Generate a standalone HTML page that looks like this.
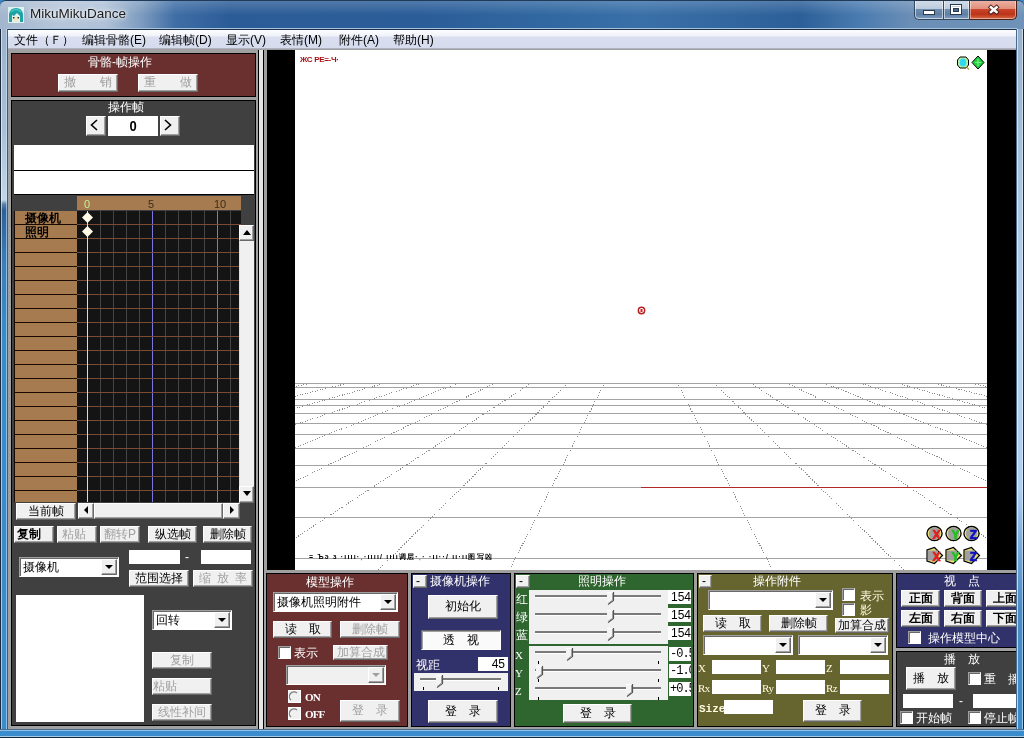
<!DOCTYPE html><html><head><meta charset="utf-8"><style>
*{margin:0;padding:0;box-sizing:border-box}
html,body{width:1024px;height:738px;overflow:hidden;background:#3a86c6}
body{will-change:transform;position:relative;font-family:"Liberation Sans",sans-serif;font-size:12px;color:#000}
div{position:absolute}
.t{white-space:nowrap;line-height:12px}
.btn{padding-bottom:2px;background:#f0f0f0;border-top:1px solid #fff;border-left:1px solid #fff;border-right:1px solid #696969;border-bottom:1px solid #696969;box-shadow:inset -1px -1px 0 #a0a0a0;display:flex;align-items:center;justify-content:center;white-space:nowrap;font-size:12px;line-height:12px}
.btn.dis{color:#a0a0a0}
.edit{background:#fff}
.combo{background:#fff;border-top:1px solid #a0a0a0;border-left:1px solid #a0a0a0;border-right:1px solid #fff;border-bottom:1px solid #fff;box-shadow:inset 1px 1px 0 #696969}
.combo .ct{position:absolute;left:3px;top:50%;transform:translateY(-50%);white-space:nowrap;font-size:12px}
.combo .cb{position:absolute;right:1px;top:1px;bottom:1px;background:#f0f0f0;border-top:1px solid #fff;border-left:1px solid #fff;border-right:1px solid #696969;border-bottom:1px solid #696969;box-shadow:inset -1px -1px 0 #a0a0a0}
.combo .cb i{position:absolute;left:50%;top:50%;margin-left:-4px;margin-top:-2px;width:0;height:0;border-left:4px solid transparent;border-right:4px solid transparent;border-top:4px solid #000}
.combo.dis .cb i{border-top-color:#a0a0a0}
.chk{background:#fff;border-top:1px solid #a0a0a0;border-left:1px solid #a0a0a0;border-right:1px solid #fff;border-bottom:1px solid #fff;box-shadow:inset 1px 1px 0 #696969}
.w{color:#fff}
</style></head><body>
<div style="left:0px;top:0px;width:1024px;height:29px;background:linear-gradient(180deg,rgba(255,255,255,.18) 0,rgba(255,255,255,0) 14px),linear-gradient(90deg,#a3b6cd 0px,#b6c6da 60px,#b0c2d8 105px,#7f9dc0 140px,#3f6ea6 175px,#2c5c97 230px,#2b5d98 420px,#3269a2 560px,#3a70a8 640px,#2c5f98 800px,#4a7bb0 860px,#6a8eb6 910px,#6f92b8 1024px);border-top:1px solid #203a5a;border-radius:6px 6px 0 0"></div>
<svg style="position:absolute;left:8px;top:7px" width="16" height="16"><rect x="0" y="0" width="16" height="16" fill="#dff2f2"/><path d="M1 15 L1 7 Q2 1 8 1 Q14 1 15 7 L15 15 L12 15 L12 9 L9 6 L6 9 L4 8 L4 15 Z" fill="#1ea2a4"/><path d="M3 5 Q8 0 13 5" stroke="#45c8c8" stroke-width="1.5" fill="none"/><ellipse cx="8" cy="12" rx="3.5" ry="3" fill="#f4e6c8"/><rect x="5" y="10" width="1.5" height="1.5" fill="#204040"/><rect x="9.5" y="10" width="1.5" height="1.5" fill="#204040"/></svg>
<div class="t" style="left:30px;top:7px;font-size:13.5px;color:#1a1a1a;line-height:13px;text-shadow:0 0 6px #fff,0 0 3px #fff">MikuMikuDance</div>
<div style="left:914px;top:0px;width:29px;height:20px;background:linear-gradient(180deg,#d4deea 0,#bccbdc 45%,#6f8db0 50%,#5f80a6 75%,#7d9cbf 100%);border:1px solid #34485f;border-top:none;border-right:none;border-radius:0 0 0 5px;box-shadow:inset 0 0 0 1px rgba(255,255,255,.55)"></div>
<div style="left:943px;top:0px;width:27px;height:20px;background:linear-gradient(180deg,#d4deea 0,#bccbdc 45%,#6f8db0 50%,#5f80a6 75%,#7d9cbf 100%);border:1px solid #34485f;border-top:none;box-shadow:inset 0 0 0 1px rgba(255,255,255,.55)"></div>
<div style="left:970px;top:0px;width:47px;height:20px;background:linear-gradient(180deg,#eeb4a8 0,#e0907c 45%,#c8442a 50%,#bc3418 75%,#d66a48 100%);border:1px solid #4a2018;border-top:none;border-left:none;border-radius:0 0 5px 0;box-shadow:inset 0 0 0 1px rgba(255,255,255,.45)"></div>
<svg width="1024" height="30" style="position:absolute;left:0;top:0"><rect x="923.5" y="10.5" width="11" height="4" fill="#fff" stroke="#2a3a4c" stroke-width="1"/><rect x="950.5" y="4.5" width="11" height="10" fill="none" stroke="#2a3a4c" stroke-width="1"/><rect x="951.5" y="5.5" width="9" height="8" fill="none" stroke="#fff" stroke-width="1"/><rect x="952.5" y="7.5" width="7" height="5" fill="#6c8aaa" stroke="#fff" stroke-width="1"/><rect x="953.5" y="8.5" width="5" height="3" fill="#4a6a8a" stroke="#2a3a4c" stroke-width="1"/><path d="M989.3 5.8 L998.2 13.6 M998.2 5.8 L989.3 13.6" stroke="#4a2018" stroke-width="4.2" stroke-linecap="butt"/><path d="M990 6.5 L997.5 12.9 M997.5 6.5 L990 12.9" stroke="#fff" stroke-width="2.5" stroke-linecap="butt"/><rect x="914" y="0" width="103" height="1" fill="#24364c"/></svg>
<div style="left:8px;top:29px;width:1008px;height:700px;background:#a0a0a0"></div>
<div style="left:7px;top:28px;width:1010px;height:1px;background:#a8c4e0"></div>
<div style="left:8px;top:29px;width:1008px;height:20px;background:linear-gradient(180deg,#fcfdfe 0,#eff2f9 6px,#d9dfef 7px,#d6dcee 17px);border-top:1px solid #1e3048;border-bottom:1px solid #b0b4c2"></div>
<div class="t" style="left:14px;top:34px;font-size:12px;line-height:12px">文件（Ｆ）</div>
<div class="t" style="left:82px;top:34px;font-size:12px;line-height:12px">编辑骨骼(E)</div>
<div class="t" style="left:159px;top:34px;font-size:12px;line-height:12px">编辑帧(D)</div>
<div class="t" style="left:226px;top:34px;font-size:12px;line-height:12px">显示(V)</div>
<div class="t" style="left:280px;top:34px;font-size:12px;line-height:12px">表情(M)</div>
<div class="t" style="left:339px;top:34px;font-size:12px;line-height:12px">附件(A)</div>
<div class="t" style="left:393px;top:34px;font-size:12px;line-height:12px">帮助(H)</div>
<div style="left:11px;top:53px;width:245px;height:44px;background:#6a3030;border:1px solid #000"></div>
<div class="t" style="left:88px;top:56px;color:#fff;font-size:12px">骨骼-帧操作</div>
<div class="btn dis" style="left:58px;top:74px;width:60px;height:18px;"><span style="">撤　　销</span></div>
<div class="btn dis" style="left:138px;top:74px;width:60px;height:18px;"><span style="">重　　做</span></div>
<div style="left:11px;top:100px;width:245px;height:626px;background:#404040;border:1px solid #000"></div>
<div class="t" style="left:108px;top:101px;color:#fff;font-size:12px">操作帧</div>
<div class="btn" style="left:86px;top:116px;width:20px;height:20px;"><span style=""></span></div>
<div class="edit" style="left:108px;top:116px;width:50px;height:20px;"><span style="position:absolute;left:0;right:0;top:2px;text-align:center;font-weight:bold;font-size:13px;transform:scaleY(1.12)">0</span></div>
<div class="btn" style="left:160px;top:116px;width:20px;height:20px;"><span style=""></span></div>
<svg style="position:absolute;left:0;top:0" width="200" height="140"><path d="M97 120 L91.5 125 L97 130" fill="none" stroke="#000" stroke-width="1.6"/><path d="M165 120 L170.5 125 L165 130" fill="none" stroke="#000" stroke-width="1.6"/></svg>
<div style="left:14px;top:145px;width:240px;height:25px;background:#fff"></div>
<div style="left:14px;top:171px;width:240px;height:23px;background:#fff"></div>
<div style="left:14px;top:170px;width:240px;height:1px;background:#000"></div>
<div style="left:14px;top:194px;width:240px;height:1px;background:#000"></div>
<div style="left:77px;top:196px;width:164px;height:14px;background:#a67b50"></div>
<div class="t" style="left:84px;top:199px;color:#c8ec98;font-size:11px;line-height:10px">0</div>
<div class="t" style="left:148px;top:199px;color:#3c2c1c;font-size:11px;line-height:10px">5</div>
<div class="t" style="left:214px;top:199px;color:#3c2c1c;font-size:11px;line-height:10px">10</div>
<svg width="1024" height="738" style="position:absolute;left:0;top:0"><rect x="77" y="211" width="164" height="291" fill="#141414"/><rect x="14" y="211" width="63" height="291" fill="#1a0a04"/><rect x="15" y="211" width="62" height="13" fill="#a67b50"/><rect x="15" y="225" width="62" height="13" fill="#a67b50"/><rect x="15" y="239" width="62" height="13" fill="#a67b50"/><rect x="15" y="253" width="62" height="13" fill="#a67b50"/><rect x="15" y="267" width="62" height="13" fill="#a67b50"/><rect x="15" y="281" width="62" height="13" fill="#a67b50"/><rect x="15" y="295" width="62" height="13" fill="#a67b50"/><rect x="15" y="309" width="62" height="13" fill="#a67b50"/><rect x="15" y="323" width="62" height="13" fill="#a67b50"/><rect x="15" y="337" width="62" height="13" fill="#a67b50"/><rect x="15" y="351" width="62" height="13" fill="#a67b50"/><rect x="15" y="365" width="62" height="13" fill="#a67b50"/><rect x="15" y="379" width="62" height="13" fill="#a67b50"/><rect x="15" y="393" width="62" height="13" fill="#a67b50"/><rect x="15" y="407" width="62" height="13" fill="#a67b50"/><rect x="15" y="421" width="62" height="13" fill="#a67b50"/><rect x="15" y="435" width="62" height="13" fill="#a67b50"/><rect x="15" y="449" width="62" height="13" fill="#a67b50"/><rect x="15" y="463" width="62" height="13" fill="#a67b50"/><rect x="15" y="477" width="62" height="13" fill="#a67b50"/><rect x="15" y="491" width="62" height="11" fill="#a67b50"/><rect x="87" y="211" width="1" height="291" fill="#bff0b0"/><rect x="100" y="211" width="1" height="291" fill="#454545"/><rect x="113" y="211" width="1" height="291" fill="#454545"/><rect x="126" y="211" width="1" height="291" fill="#454545"/><rect x="139" y="211" width="1" height="291" fill="#454545"/><rect x="152" y="211" width="1" height="291" fill="#7878e0"/><rect x="165" y="211" width="1" height="291" fill="#454545"/><rect x="178" y="211" width="1" height="291" fill="#454545"/><rect x="191" y="211" width="1" height="291" fill="#454545"/><rect x="204" y="211" width="1" height="291" fill="#454545"/><rect x="217" y="211" width="1" height="291" fill="#7878e0"/><rect x="230" y="211" width="1" height="291" fill="#454545"/><rect x="77" y="224" width="164" height="1" fill="#7a4c36"/><rect x="77" y="238" width="164" height="1" fill="#7a4c36"/><rect x="77" y="252" width="164" height="1" fill="#7a4c36"/><rect x="77" y="266" width="164" height="1" fill="#7a4c36"/><rect x="77" y="280" width="164" height="1" fill="#7a4c36"/><rect x="77" y="294" width="164" height="1" fill="#7a4c36"/><rect x="77" y="308" width="164" height="1" fill="#7a4c36"/><rect x="77" y="322" width="164" height="1" fill="#7a4c36"/><rect x="77" y="336" width="164" height="1" fill="#7a4c36"/><rect x="77" y="350" width="164" height="1" fill="#7a4c36"/><rect x="77" y="364" width="164" height="1" fill="#7a4c36"/><rect x="77" y="378" width="164" height="1" fill="#7a4c36"/><rect x="77" y="392" width="164" height="1" fill="#7a4c36"/><rect x="77" y="406" width="164" height="1" fill="#7a4c36"/><rect x="77" y="420" width="164" height="1" fill="#7a4c36"/><rect x="77" y="434" width="164" height="1" fill="#7a4c36"/><rect x="77" y="448" width="164" height="1" fill="#7a4c36"/><rect x="77" y="462" width="164" height="1" fill="#7a4c36"/><rect x="77" y="476" width="164" height="1" fill="#7a4c36"/><rect x="77" y="490" width="164" height="1" fill="#7a4c36"/><rect x="87" y="211" width="1" height="291" fill="#bff0b0"/><path d="M87.5 212 L93 217.5 L87.5 223 L82 217.5 Z" fill="#fffbe8"/><path d="M87.5 226 L93 231.5 L87.5 237 L82 231.5 Z" fill="#fffbe8"/></svg>
<div class="t" style="left:25px;top:212px;font-size:12px;line-height:12px;color:#000;font-weight:bold">摄像机</div>
<div class="t" style="left:25px;top:226px;font-size:12px;line-height:12px;color:#000;font-weight:bold">照明</div>
<div style="left:239px;top:225px;width:15px;height:278px;background:#f0f0f0;border-left:1px solid #e0e0e0"></div>
<div class="btn" style="left:239px;top:225px;width:15px;height:16px;"><span style=""><i style="display:block;width:0;height:0;border-left:4.5px solid transparent;border-right:4.5px solid transparent;border-bottom:5px solid #000"></i></span></div>
<div class="btn" style="left:239px;top:486px;width:15px;height:17px;"><span style=""><i style="display:block;width:0;height:0;border-left:4.5px solid transparent;border-right:4.5px solid transparent;border-top:5px solid #000"></i></span></div>
<div style="left:78px;top:503px;width:162px;height:16px;background:#f0f0f0"></div>
<div class="btn" style="left:78px;top:503px;width:16px;height:16px;"><span style=""><i style="display:block;width:0;height:0;border-top:4px solid transparent;border-bottom:4px solid transparent;border-right:4px solid #000"></i></span></div>
<div class="btn" style="left:94px;top:503px;width:129px;height:16px;"><span style=""></span></div>
<div class="btn" style="left:223px;top:503px;width:17px;height:16px;"><span style=""><i style="display:block;width:0;height:0;border-top:4px solid transparent;border-bottom:4px solid transparent;border-left:4px solid #000"></i></span></div>
<div class="btn" style="left:16px;top:503px;width:60px;height:17px;font-size:12px"><span style="">当前帧</span></div>
<div class="btn" style="left:14px;top:526px;width:40px;height:17px;font-size:12px;font-weight:bold;justify-content:flex-start;padding-left:2px"><span style="">复制</span></div>
<div class="btn dis" style="left:57px;top:526px;width:40px;height:17px;font-size:12px;justify-content:flex-start;padding-left:4px"><span style="">粘贴</span></div>
<div class="btn dis" style="left:100px;top:526px;width:40px;height:17px;font-size:12px"><span style="">翻转P</span></div>
<div class="btn" style="left:148px;top:526px;width:49px;height:17px;font-size:12px"><span style="">纵选帧</span></div>
<div class="btn" style="left:203px;top:526px;width:49px;height:17px;font-size:12px"><span style="">删除帧</span></div>
<div class="combo" style="left:19px;top:557px;width:100px;height:20px;"><span class="ct">摄像机</span><div class="cb" style="width:16px;"><i></i></div></div>
<div class="edit" style="left:129px;top:550px;width:51px;height:14px;"></div>
<div class="t" style="left:185px;top:551px;color:#fff;font-size:12px">-</div>
<div class="edit" style="left:201px;top:550px;width:50px;height:14px;"></div>
<div class="btn" style="left:129px;top:570px;width:60px;height:17px;font-size:12px"><span style="">范围选择</span></div>
<div class="btn dis" style="left:193px;top:570px;width:60px;height:17px;font-size:12px"><span style="">缩&ensp;放&ensp;率</span></div>
<div style="left:16px;top:595px;width:128px;height:127px;background:#fff"></div>
<div class="combo" style="left:152px;top:610px;width:80px;height:20px;"><span class="ct">回转</span><div class="cb" style="width:16px;"><i></i></div></div>
<div class="btn dis" style="left:152px;top:652px;width:60px;height:17px;font-size:12px"><span style="">复制</span></div>
<div class="btn dis" style="left:152px;top:678px;width:60px;height:17px;font-size:12px;justify-content:flex-start"><span style="">粘贴</span></div>
<div class="btn dis" style="left:152px;top:704px;width:60px;height:17px;font-size:12px"><span style="">线性补间</span></div>
<div style="left:267px;top:50px;width:750px;height:520px;background:#000"></div>
<div style="left:295px;top:50px;width:692px;height:520px;background:#fff"></div>
<svg width="1024" height="738" style="position:absolute;left:0;top:0"><defs><clipPath id="vc"><rect x="295" y="50" width="692" height="520"/></clipPath></defs><g clip-path="url(#vc)"><line x1="312.14" y1="383" x2="-541.98" y2="570" stroke="#8c8c8c" stroke-width="1" stroke-dasharray="1 1.6" shape-rendering="crispEdges"/><line x1="348.68" y1="383" x2="-410.54" y2="570" stroke="#8c8c8c" stroke-width="1" stroke-dasharray="1 1.6" shape-rendering="crispEdges"/><line x1="385.22" y1="383" x2="-279.10" y2="570" stroke="#8c8c8c" stroke-width="1" stroke-dasharray="1 1.6" shape-rendering="crispEdges"/><line x1="421.76" y1="383" x2="-147.65" y2="570" stroke="#8c8c8c" stroke-width="1" stroke-dasharray="1 1.6" shape-rendering="crispEdges"/><line x1="458.30" y1="383" x2="-16.21" y2="570" stroke="#8c8c8c" stroke-width="1" stroke-dasharray="1 1.6" shape-rendering="crispEdges"/><line x1="494.84" y1="383" x2="115.23" y2="570" stroke="#8c8c8c" stroke-width="1" stroke-dasharray="1 1.6" shape-rendering="crispEdges"/><line x1="531.38" y1="383" x2="246.67" y2="570" stroke="#8c8c8c" stroke-width="1" stroke-dasharray="1 1.6" shape-rendering="crispEdges"/><line x1="567.92" y1="383" x2="378.12" y2="570" stroke="#8c8c8c" stroke-width="1" stroke-dasharray="1 1.6" shape-rendering="crispEdges"/><line x1="604.46" y1="383" x2="509.56" y2="570" stroke="#8c8c8c" stroke-width="1" stroke-dasharray="1 1.6" shape-rendering="crispEdges"/><line x1="677.54" y1="383" x2="772.44" y2="570" stroke="#8c8c8c" stroke-width="1" stroke-dasharray="1 1.6" shape-rendering="crispEdges"/><line x1="714.08" y1="383" x2="903.88" y2="570" stroke="#8c8c8c" stroke-width="1" stroke-dasharray="1 1.6" shape-rendering="crispEdges"/><line x1="750.62" y1="383" x2="1035.33" y2="570" stroke="#8c8c8c" stroke-width="1" stroke-dasharray="1 1.6" shape-rendering="crispEdges"/><line x1="787.16" y1="383" x2="1166.77" y2="570" stroke="#8c8c8c" stroke-width="1" stroke-dasharray="1 1.6" shape-rendering="crispEdges"/><line x1="823.70" y1="383" x2="1298.21" y2="570" stroke="#8c8c8c" stroke-width="1" stroke-dasharray="1 1.6" shape-rendering="crispEdges"/><line x1="860.24" y1="383" x2="1429.65" y2="570" stroke="#8c8c8c" stroke-width="1" stroke-dasharray="1 1.6" shape-rendering="crispEdges"/><line x1="896.78" y1="383" x2="1561.10" y2="570" stroke="#8c8c8c" stroke-width="1" stroke-dasharray="1 1.6" shape-rendering="crispEdges"/><line x1="933.32" y1="383" x2="1692.54" y2="570" stroke="#8c8c8c" stroke-width="1" stroke-dasharray="1 1.6" shape-rendering="crispEdges"/><line x1="969.86" y1="383" x2="1823.98" y2="570" stroke="#8c8c8c" stroke-width="1" stroke-dasharray="1 1.6" shape-rendering="crispEdges"/><rect x="295" y="383" width="692" height="1" fill="#a4a4a4"/><rect x="295" y="387" width="692" height="1" fill="#a4a4a4"/><rect x="295" y="399" width="692" height="1" fill="#a4a4a4"/><rect x="295" y="405" width="692" height="1" fill="#a4a4a4"/><rect x="295" y="413" width="692" height="1" fill="#a4a4a4"/><rect x="295" y="423" width="692" height="1" fill="#a4a4a4"/><rect x="295" y="434" width="692" height="1" fill="#a4a4a4"/><rect x="295" y="448" width="692" height="1" fill="#a4a4a4"/><rect x="295" y="465" width="692" height="1" fill="#a4a4a4"/><rect x="295" y="487" width="692" height="1" fill="#a4a4a4"/><rect x="295" y="517" width="692" height="1" fill="#a4a4a4"/><rect x="295" y="558" width="692" height="1" fill="#a4a4a4"/><rect x="641" y="487" width="346" height="1" fill="#b02828"/></g><circle cx="641.5" cy="310.5" r="3.2" fill="#fff" stroke="#b82020" stroke-width="1.4"/><rect x="640.5" y="309" width="2" height="3" fill="#d02020"/><path d="M960 57 L966 57 L968.5 60 L968.5 65 L966 68 L960 68 L957.5 65 L957.5 60 Z" fill="#b8f0a8" stroke="#000" stroke-width="1"/><ellipse cx="963" cy="62.5" rx="3.3" ry="4" fill="#30d8f0"/><path d="M966.5 67 L969 69.5" stroke="#b0a040" stroke-width="1.5"/><path d="M978 56 L984 62.5 L978 69 L972 62.5 Z" fill="#20d040" stroke="#000" stroke-width="1"/><path d="M978 59 V66 M975 62.5 H981" stroke="#80f080" stroke-width="1.2"/><ellipse cx="934.5" cy="533.5" rx="7.6" ry="7" fill="#e8e070" stroke="#000" stroke-width="1.3"/><ellipse cx="934.5" cy="533.5" rx="5.6" ry="6.4" fill="#a0a0a0"/><text x="936.5" y="538.5" font-family="Liberation Sans" font-weight="bold" font-size="12" fill="#e02020" stroke="#e02020" stroke-width="0.7" text-anchor="middle">X</text><path d="M934.5 547.5 L942.5 555.5 L934.5 563.5 L927.0 561.0 L927.0 550.0 Z" fill="#e8e070" stroke="#000" stroke-width="1.2"/><rect x="928.0" y="550.5" width="10" height="10" fill="#a0a0a0"/><text x="936.5" y="560.5" font-family="Liberation Sans" font-weight="bold" font-size="12" fill="#e02020" stroke="#e02020" stroke-width="0.7" text-anchor="middle">X</text><ellipse cx="953.5" cy="533.5" rx="7.6" ry="7" fill="#e8e070" stroke="#000" stroke-width="1.3"/><ellipse cx="953.5" cy="533.5" rx="5.6" ry="6.4" fill="#a0a0a0"/><text x="955.5" y="538.5" font-family="Liberation Sans" font-weight="bold" font-size="12" fill="#20c020" stroke="#20c020" stroke-width="0.7" text-anchor="middle">Y</text><path d="M953.5 547.5 L961.5 555.5 L953.5 563.5 L946.0 561.0 L946.0 550.0 Z" fill="#e8e070" stroke="#000" stroke-width="1.2"/><rect x="947.0" y="550.5" width="10" height="10" fill="#a0a0a0"/><text x="955.5" y="560.5" font-family="Liberation Sans" font-weight="bold" font-size="12" fill="#20c020" stroke="#20c020" stroke-width="0.7" text-anchor="middle">Y</text><ellipse cx="971.5" cy="533.5" rx="7.6" ry="7" fill="#e8e070" stroke="#000" stroke-width="1.3"/><ellipse cx="971.5" cy="533.5" rx="5.6" ry="6.4" fill="#a0a0a0"/><text x="973.5" y="538.5" font-family="Liberation Sans" font-weight="bold" font-size="12" fill="#1010c0" stroke="#1010c0" stroke-width="0.7" text-anchor="middle">Z</text><path d="M971.5 547.5 L979.5 555.5 L971.5 563.5 L964.0 561.0 L964.0 550.0 Z" fill="#e8e070" stroke="#000" stroke-width="1.2"/><rect x="965.0" y="550.5" width="10" height="10" fill="#a0a0a0"/><text x="973.5" y="560.5" font-family="Liberation Sans" font-weight="bold" font-size="12" fill="#1010c0" stroke="#1010c0" stroke-width="0.7" text-anchor="middle">Z</text></svg>
<div class="t" style="left:300px;top:56px;color:#a81010;font-size:8px;line-height:8px;font-weight:bold;letter-spacing:-0.3px">ЖС РЕ=-Ч·</div>
<div class="t" style="left:309px;top:553px;color:#000;font-size:7px;line-height:7px;font-weight:bold;letter-spacing:1.2px">= Ъэ з ·ıııı·ˌ·ıııı/ ıııı调层·ˌ·  ·ıı··/ ıı·ıı图写凶</div>
<div style="left:266px;top:573px;width:142px;height:154px;background:#6a3030;border:1px solid #000"></div>
<div style="left:411px;top:573px;width:100px;height:154px;background:#31316b;border:1px solid #000"></div>
<div style="left:514px;top:573px;width:180px;height:154px;background:#2f652f;border:1px solid #000"></div>
<div style="left:697px;top:573px;width:196px;height:154px;background:#666530;border:1px solid #000"></div>
<div style="left:896px;top:573px;width:121px;height:75px;background:#31316b;border:1px solid #000;border-right:none"></div>
<div style="left:896px;top:651px;width:121px;height:76px;background:#404040;border:1px solid #000;border-right:none"></div>
<div class="t" style="left:306px;top:576px;color:#fff;font-size:12px">模型操作</div>
<div class="combo" style="left:273px;top:592px;width:125px;height:20px;"><span class="ct">摄像机照明附件</span><div class="cb" style="width:16px;"><i></i></div></div>
<div class="btn" style="left:273px;top:621px;width:59px;height:17px;font-size:12px"><span style="">读　取</span></div>
<div class="btn dis" style="left:340px;top:621px;width:60px;height:17px;font-size:12px"><span style="">删除帧</span></div>
<div class="chk" style="left:278px;top:646px;width:13px;height:13px;"></div>
<div class="t" style="left:294px;top:647px;color:#fff;font-size:12px;line-height:12px">表示</div>
<div class="btn dis" style="left:333px;top:645px;width:55px;height:15px;font-size:12px"><span style="">加算合成</span></div>
<div class="combo dis" style="left:286px;top:665px;width:100px;height:20px;background:#f0f0f0"><span class="ct"></span><div class="cb" style="width:16px;"><i></i></div></div>
<div style="left:288px;top:690px;width:13px;height:13px;background:#f0f0f0;border:1px solid #fff;border-radius:0"></div>
<svg style="position:absolute;left:288px;top:690px" width="13" height="13"><path d="M9 3 A4.5 4.5 0 1 0 3 10" fill="none" stroke="#808080" stroke-width="1.3"/></svg>
<div class="t" style="left:305px;top:692px;color:#fff;font-family:Liberation Serif,serif;font-weight:bold;font-size:11px;line-height:10px;letter-spacing:-0.9px">ON</div>
<div style="left:288px;top:707px;width:13px;height:13px;background:#f0f0f0;border:1px solid #fff"></div>
<svg style="position:absolute;left:288px;top:707px" width="13" height="13"><path d="M9 3 A4.5 4.5 0 1 0 3 10" fill="none" stroke="#808080" stroke-width="1.3"/></svg>
<div class="t" style="left:305px;top:709px;color:#fff;font-family:Liberation Serif,serif;font-weight:bold;font-size:11px;line-height:10px;letter-spacing:-0.9px">OFF</div>
<div class="btn dis" style="left:340px;top:700px;width:60px;height:22px;font-size:12px"><span style="">登　录</span></div>
<div class="btn" style="left:413px;top:575px;width:14px;height:13px;font-size:12px"><span style=""><span style="position:absolute;left:2px;top:-1px">-</span></span></div>
<div class="t" style="left:430px;top:575px;color:#fff;font-size:12px;line-height:12px">摄像机操作</div>
<div class="btn" style="left:428px;top:595px;width:70px;height:24px;font-size:12px"><span style="">初始化</span></div>
<div style="left:421px;top:630px;width:80px;height:20px;background:#fafafa;border-top:1px solid #696969;border-left:1px solid #696969;border-right:1px solid #fff;border-bottom:1px solid #fff;box-shadow:inset 1px 1px 0 #a0a0a0;display:flex;align-items:center;justify-content:center;font-size:12px;line-height:12px">透　视</div>
<div class="t" style="left:416px;top:659px;color:#fff;font-size:12px;line-height:12px">视距</div>
<div class="edit" style="left:478px;top:657px;width:30px;height:14px;"><span style="position:absolute;right:3px;top:1px;font-size:12px;line-height:12px">45</span></div>
<div style="left:414px;top:673px;width:94px;height:18px;background:#f0f0f0"></div>
<div style="left:420px;top:678px;width:81px;height:3px;background:#7a7a7a;border-bottom:1px solid #fff"></div>
<svg style="position:absolute;left:436px;top:675px" width="8" height="13"><path d="M0 0 H6 V8 L1 12 L0 11 Z" fill="#f4f4f4"/><path d="M0 0.5 H5.5" stroke="#fff" stroke-width="1"/><path d="M6.5 0 V8.5 L1 12.5" fill="none" stroke="#555" stroke-width="1.2"/><path d="M5.5 1 V8 L1 11.5" fill="none" stroke="#a0a0a0" stroke-width="1"/></svg>
<div style="left:423px;top:687px;width:1px;height:3px;background:#000"></div>
<div style="left:498px;top:687px;width:1px;height:3px;background:#000"></div>
<div class="btn" style="left:428px;top:700px;width:70px;height:23px;font-size:12px"><span style="">登　录</span></div>
<div class="btn" style="left:516px;top:575px;width:14px;height:13px;font-size:12px"><span style=""><span style="position:absolute;left:2px;top:-1px">-</span></span></div>
<div class="t" style="left:578px;top:575px;color:#fff;font-size:12px;line-height:12px">照明操作</div>
<div class="t" style="left:516px;top:593px;color:#fff;font-size:12px;line-height:12px">红</div>
<div class="t" style="left:516px;top:611px;color:#fff;font-size:12px;line-height:12px">绿</div>
<div class="t" style="left:516px;top:629px;color:#fff;font-size:12px;line-height:12px">蓝</div>
<div style="left:529px;top:590px;width:139px;height:54px;background:#f0f0f0"></div>
<div style="left:535px;top:595px;width:126px;height:3px;background:#7a7a7a;border-bottom:1px solid #fff"></div>
<svg style="position:absolute;left:607px;top:592px" width="8" height="13"><path d="M0 0 H6 V8 L1 12 L0 11 Z" fill="#f4f4f4"/><path d="M0 0.5 H5.5" stroke="#fff" stroke-width="1"/><path d="M6.5 0 V8.5 L1 12.5" fill="none" stroke="#555" stroke-width="1.2"/><path d="M5.5 1 V8 L1 11.5" fill="none" stroke="#a0a0a0" stroke-width="1"/></svg>
<div style="left:535px;top:613px;width:126px;height:3px;background:#7a7a7a;border-bottom:1px solid #fff"></div>
<svg style="position:absolute;left:607px;top:610px" width="8" height="13"><path d="M0 0 H6 V8 L1 12 L0 11 Z" fill="#f4f4f4"/><path d="M0 0.5 H5.5" stroke="#fff" stroke-width="1"/><path d="M6.5 0 V8.5 L1 12.5" fill="none" stroke="#555" stroke-width="1.2"/><path d="M5.5 1 V8 L1 11.5" fill="none" stroke="#a0a0a0" stroke-width="1"/></svg>
<div style="left:535px;top:631px;width:126px;height:3px;background:#7a7a7a;border-bottom:1px solid #fff"></div>
<svg style="position:absolute;left:607px;top:628px" width="8" height="13"><path d="M0 0 H6 V8 L1 12 L0 11 Z" fill="#f4f4f4"/><path d="M0 0.5 H5.5" stroke="#fff" stroke-width="1"/><path d="M6.5 0 V8.5 L1 12.5" fill="none" stroke="#555" stroke-width="1.2"/><path d="M5.5 1 V8 L1 11.5" fill="none" stroke="#a0a0a0" stroke-width="1"/></svg>
<div class="edit" style="left:668px;top:590px;width:23px;height:14px;"><span style="position:absolute;left:3px;top:1px;font-size:12px;line-height:12px">154</span></div>
<div class="edit" style="left:668px;top:608px;width:23px;height:14px;"><span style="position:absolute;left:3px;top:1px;font-size:12px;line-height:12px">154</span></div>
<div class="edit" style="left:668px;top:626px;width:23px;height:14px;"><span style="position:absolute;left:3px;top:1px;font-size:12px;line-height:12px">154</span></div>
<div class="t" style="left:515px;top:650px;color:#fff;font-family:Liberation Serif,serif;font-size:11px;line-height:10px">X</div>
<div class="t" style="left:515px;top:668px;color:#fff;font-family:Liberation Serif,serif;font-size:11px;line-height:10px">Y</div>
<div class="t" style="left:515px;top:686px;color:#fff;font-family:Liberation Serif,serif;font-size:11px;line-height:10px">Z</div>
<div style="left:529px;top:646px;width:139px;height:54px;background:#f0f0f0"></div>
<div style="left:535px;top:651px;width:126px;height:3px;background:#7a7a7a;border-bottom:1px solid #fff"></div>
<svg style="position:absolute;left:566px;top:648px" width="8" height="13"><path d="M0 0 H6 V8 L1 12 L0 11 Z" fill="#f4f4f4"/><path d="M0 0.5 H5.5" stroke="#fff" stroke-width="1"/><path d="M6.5 0 V8.5 L1 12.5" fill="none" stroke="#555" stroke-width="1.2"/><path d="M5.5 1 V8 L1 11.5" fill="none" stroke="#a0a0a0" stroke-width="1"/></svg>
<div style="left:535px;top:669px;width:126px;height:3px;background:#7a7a7a;border-bottom:1px solid #fff"></div>
<svg style="position:absolute;left:536px;top:666px" width="8" height="13"><path d="M0 0 H6 V8 L1 12 L0 11 Z" fill="#f4f4f4"/><path d="M0 0.5 H5.5" stroke="#fff" stroke-width="1"/><path d="M6.5 0 V8.5 L1 12.5" fill="none" stroke="#555" stroke-width="1.2"/><path d="M5.5 1 V8 L1 11.5" fill="none" stroke="#a0a0a0" stroke-width="1"/></svg>
<div style="left:535px;top:687px;width:126px;height:3px;background:#7a7a7a;border-bottom:1px solid #fff"></div>
<svg style="position:absolute;left:626px;top:684px" width="8" height="13"><path d="M0 0 H6 V8 L1 12 L0 11 Z" fill="#f4f4f4"/><path d="M0 0.5 H5.5" stroke="#fff" stroke-width="1"/><path d="M6.5 0 V8.5 L1 12.5" fill="none" stroke="#555" stroke-width="1.2"/><path d="M5.5 1 V8 L1 11.5" fill="none" stroke="#a0a0a0" stroke-width="1"/></svg>
<div style="left:538px;top:661px;width:1px;height:3px;background:#000"></div>
<div style="left:658px;top:661px;width:1px;height:3px;background:#000"></div>
<div style="left:538px;top:679px;width:1px;height:3px;background:#000"></div>
<div style="left:658px;top:679px;width:1px;height:3px;background:#000"></div>
<div style="left:538px;top:697px;width:1px;height:3px;background:#000"></div>
<div style="left:658px;top:697px;width:1px;height:3px;background:#000"></div>
<div class="edit" style="left:669px;top:647px;width:22px;height:14px;overflow:hidden"><span style="position:absolute;left:1px;top:1px;font-family:Liberation Mono,monospace;font-size:12px;line-height:12px;letter-spacing:-1px">-0.5</span></div>
<div class="edit" style="left:669px;top:664px;width:22px;height:14px;overflow:hidden"><span style="position:absolute;left:1px;top:1px;font-family:Liberation Mono,monospace;font-size:12px;line-height:12px;letter-spacing:-1px">-1.0</span></div>
<div class="edit" style="left:669px;top:682px;width:22px;height:14px;overflow:hidden"><span style="position:absolute;left:1px;top:1px;font-family:Liberation Mono,monospace;font-size:12px;line-height:12px;letter-spacing:-1px">+0.5</span></div>
<div class="btn" style="left:563px;top:704px;width:69px;height:19px;font-size:12px"><span style="">登　录</span></div>
<div class="btn" style="left:699px;top:575px;width:13px;height:13px;font-size:12px"><span style=""><span style="position:absolute;left:2px;top:-1px">-</span></span></div>
<div class="t" style="left:753px;top:575px;color:#fff;font-size:12px;line-height:12px">操作附件</div>
<div class="combo" style="left:708px;top:590px;width:125px;height:20px;"><span class="ct"></span><div class="cb" style="width:16px;"><i></i></div></div>
<div class="chk" style="left:842px;top:588px;width:13px;height:13px;"></div>
<div class="t" style="left:860px;top:590px;color:#fffbe0;font-size:12px;line-height:12px">表示</div>
<div class="chk" style="left:842px;top:603px;width:13px;height:13px;"></div>
<div class="t" style="left:860px;top:604px;color:#fffbe0;font-size:12px;line-height:12px">影</div>
<div class="btn" style="left:703px;top:615px;width:59px;height:17px;font-size:12px"><span style="">读　取</span></div>
<div class="btn" style="left:769px;top:615px;width:59px;height:17px;font-size:12px"><span style="">删除帧</span></div>
<div class="btn" style="left:835px;top:618px;width:54px;height:15px;font-size:12px"><span style="">加算合成</span></div>
<div class="combo" style="left:703px;top:635px;width:90px;height:20px;"><span class="ct"></span><div class="cb" style="width:16px;"><i></i></div></div>
<div class="combo" style="left:798px;top:635px;width:90px;height:20px;"><span class="ct"></span><div class="cb" style="width:16px;"><i></i></div></div>
<div class="t" style="left:698px;top:663px;color:#fffbe0;font-family:Liberation Serif,serif;font-size:11px;line-height:10px;letter-spacing:-0.5px">X</div>
<div class="edit" style="left:712px;top:660px;width:49px;height:14px;"></div>
<div class="t" style="left:762px;top:663px;color:#fffbe0;font-family:Liberation Serif,serif;font-size:11px;line-height:10px;letter-spacing:-0.5px">Y</div>
<div class="edit" style="left:776px;top:660px;width:49px;height:14px;"></div>
<div class="t" style="left:826px;top:663px;color:#fffbe0;font-family:Liberation Serif,serif;font-size:11px;line-height:10px;letter-spacing:-0.5px">Z</div>
<div class="edit" style="left:840px;top:660px;width:49px;height:14px;"></div>
<div class="t" style="left:698px;top:683px;color:#fffbe0;font-family:Liberation Serif,serif;font-size:11px;line-height:10px;letter-spacing:-0.5px">Rx</div>
<div class="edit" style="left:712px;top:680px;width:49px;height:14px;"></div>
<div class="t" style="left:762px;top:683px;color:#fffbe0;font-family:Liberation Serif,serif;font-size:11px;line-height:10px;letter-spacing:-0.5px">Ry</div>
<div class="edit" style="left:776px;top:680px;width:49px;height:14px;"></div>
<div class="t" style="left:826px;top:683px;color:#fffbe0;font-family:Liberation Serif,serif;font-size:11px;line-height:10px;letter-spacing:-0.5px">Rz</div>
<div class="edit" style="left:840px;top:680px;width:49px;height:14px;"></div>
<div class="t" style="left:699px;top:704px;color:#fffbe0;font-family:Liberation Mono,monospace;font-weight:bold;font-size:11px;line-height:10px">Size</div>
<div class="edit" style="left:724px;top:700px;width:49px;height:14px;"></div>
<div class="btn" style="left:803px;top:700px;width:59px;height:22px;font-size:12px"><span style="">登　录</span></div>
<div class="t" style="left:944px;top:575px;color:#fff;font-size:12px;line-height:12px">视　点</div>
<div class="btn" style="left:901px;top:590px;width:39px;height:17px;font-size:12px;font-weight:bold"><span style="">正面</span></div>
<div class="btn" style="left:944px;top:590px;width:38px;height:17px;font-size:12px;font-weight:bold"><span style="">背面</span></div>
<div class="btn" style="left:986px;top:590px;width:38px;height:17px;font-size:12px;font-weight:bold"><span style="">上面</span></div>
<div class="btn" style="left:901px;top:610px;width:39px;height:17px;font-size:12px;font-weight:bold"><span style="">左面</span></div>
<div class="btn" style="left:944px;top:610px;width:38px;height:17px;font-size:12px;font-weight:bold"><span style="">右面</span></div>
<div class="btn" style="left:986px;top:610px;width:38px;height:17px;font-size:12px;font-weight:bold"><span style="">下面</span></div>
<div class="chk" style="left:908px;top:631px;width:13px;height:13px;"></div>
<div class="t" style="left:928px;top:632px;color:#fff;font-size:12px;line-height:12px">操作模型中心</div>
<div class="t" style="left:944px;top:653px;color:#fff;font-size:12px;line-height:12px">播　放</div>
<div class="btn" style="left:906px;top:667px;width:50px;height:23px;font-size:12px"><span style="">播　放</span></div>
<div class="chk" style="left:968px;top:672px;width:13px;height:13px;"></div>
<div class="t" style="left:984px;top:673px;color:#fff;font-size:12px;line-height:12px">重　播</div>
<div class="edit" style="left:903px;top:694px;width:50px;height:14px;"></div>
<div class="t" style="left:959px;top:695px;color:#fff">-</div>
<div class="edit" style="left:973px;top:694px;width:51px;height:14px;"></div>
<div class="chk" style="left:900px;top:711px;width:13px;height:13px;"></div>
<div class="t" style="left:916px;top:712px;color:#fff;font-size:12px;line-height:12px">开始帧</div>
<div class="chk" style="left:968px;top:711px;width:13px;height:13px;"></div>
<div class="t" style="left:984px;top:712px;color:#fff;font-size:12px;line-height:12px">停止帧</div>
<div style="left:258px;top:50px;width:6px;height:679px;background:#e6e6e6;border-left:1px solid #000;border-right:1px solid #000"></div>
<div style="left:0px;top:29px;width:8px;height:709px;background:linear-gradient(180deg,#9db2ca 0,#a9c0d6 100px,#c4d6e6 171px,#5a84ac 175px,#2e6096 181px,#3a7cb8 230px,#3a8ac8 300px,#3a8ccc 709px);border-left:1px solid #1a2a3a;box-shadow:inset 1px 0 0 rgba(255,255,255,.55), inset -1px 0 0 #3d5a78, inset -2px 0 0 rgba(200,230,255,.6)"></div>
<div style="left:1016px;top:29px;width:8px;height:709px;background:linear-gradient(180deg,#98b0cc 0,#a8c4e0 150px,#b4d2f0 300px,#accef0 460px,#6fa2d4 530px,#4a8cc8 580px,#3a8ccc 709px);border-right:1px solid #1a2a3a;box-shadow:inset -1px 0 0 rgba(255,255,255,.5), inset 1px 0 0 #4a6a88, inset 2px 0 0 rgba(230,245,255,.7)"></div>
<div style="left:0px;top:729px;width:1024px;height:9px;background:#3a8ccc;border-bottom:1px solid #1a2a3a;box-shadow:inset 0 -1px 0 rgba(255,255,255,.55), inset 0 1px 0 #4a6a88, inset 0 2px 0 rgba(200,230,255,.6)"></div>
</body></html>
